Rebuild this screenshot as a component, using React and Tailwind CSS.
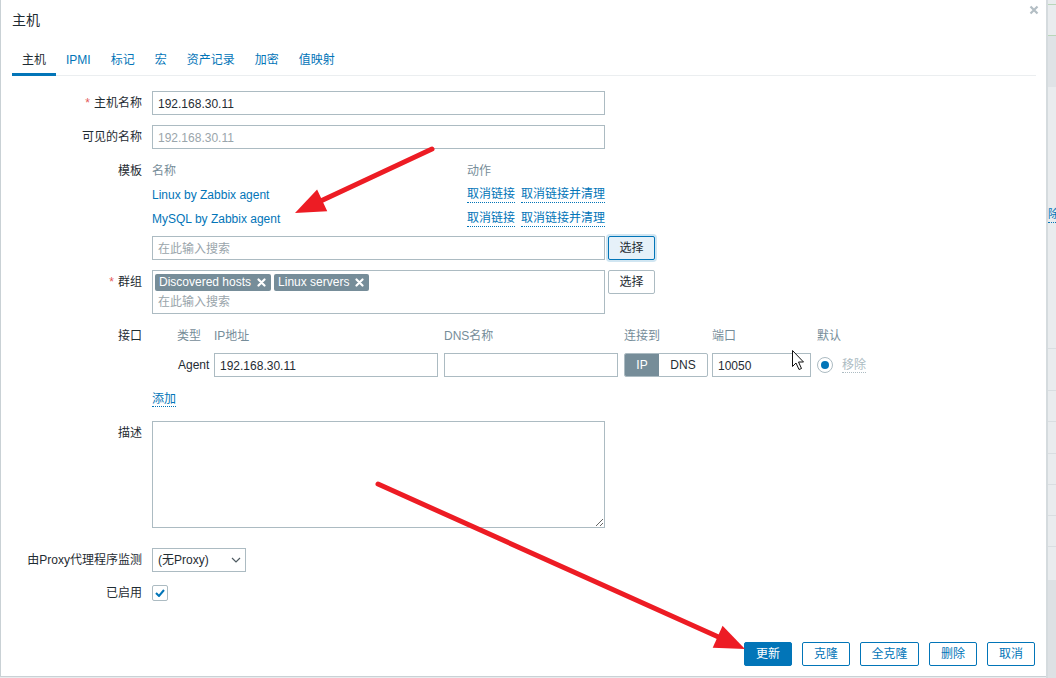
import React from "react";

const FONT = "font-['Liberation_Sans','Noto_Sans_CJK_SC',sans-serif]";

const Row = ({ label, required, labelClass = "leading-[24px]", className = "", children }) => (
  <div className={`flex ${className}`}>
    <div className={`w-[141px] shrink-0 text-right text-[#1f2c33] ${labelClass}`}>
      {required && <span className="text-[#e45959] mr-[4px]">*</span>}
      {label}
    </div>
    <div className="ml-[10px] flex-1">{children}</div>
  </div>
);

const Input = ({ value, placeholder, className = "w-[453px]" }) => (
  <div className={`h-[24px] border border-[#acbbc2] bg-white px-[5px] pt-px leading-[22px] ${className}`}>
    {value ? (
      <span className="text-[#1f2c33]">{value}</span>
    ) : (
      <span className="text-[#9aa5ab]">{placeholder}</span>
    )}
  </div>
);

const Tag = ({ text }) => (
  <span className="flex h-[17px] items-center gap-[6px] rounded-[2px] bg-[#768d99] pl-[4px] pr-[5px] text-white leading-[17px]">
    {text}
    <svg width="9" height="9" viewBox="0 0 9 9">
      <path d="M1.5 1.5l6 6M7.5 1.5l-6 6" stroke="#fff" strokeWidth="2.2" strokeLinecap="round" />
    </svg>
  </span>
);

const DotLink = ({ children, gray }) => (
  <span
    className={`border-b border-dotted leading-[15px] ${
      gray ? "text-[#acbbc2] border-[#acbbc2]" : "text-[#0275b8] border-[#0275b8]"
    }`}
  >
    {children}
  </span>
);

const tabs = ["主机", "IPMI", "标记", "宏", "资产记录", "加密", "值映射"];
const footerButtons = [
  { text: "更新", w: "w-[48px]", primary: true },
  { text: "克隆", w: "w-[48px]" },
  { text: "全克隆", w: "w-[59px]" },
  { text: "删除", w: "w-[48px]" },
  { text: "取消", w: "w-[48px]" },
];

function Arrow({ x1, y1, x2, y2, len = 30, half = 12 }) {
  const dx = x2 - x1;
  const dy = y2 - y1;
  const d = Math.hypot(dx, dy);
  const ux = dx / d;
  const uy = dy / d;
  const bx = x2 - ux * len;
  const by = y2 - uy * len;
  const px = -uy;
  const py = ux;
  const pts = `${x2},${y2} ${bx + px * half},${by + py * half} ${bx - px * half},${by - py * half}`;
  return (
    <g>
      <line x1={x1} y1={y1} x2={bx + ux * 4} y2={by + uy * 4} stroke="#ed1c24" strokeWidth="5" strokeLinecap="round" />
      <polygon points={pts} fill="#ed1c24" />
    </g>
  );
}

export default function App() {
  return (
    <div className={`relative flex h-[678px] w-[1056px] overflow-hidden bg-[#e9ecee] text-[12px] ${FONT}`}>
      {/* dialog */}
      <div className="relative flex h-[677px] w-[1046px] shrink-0 flex-col border-b border-l border-[#c9d1d5] bg-white">
        <div className="flex h-[40px] items-center pl-[11px] text-[14px] text-[#1f2c33]">主机</div>
        <svg className="absolute right-[7px] top-[5px]" width="10" height="10" viewBox="0 0 10 10">
          <path d="M1.5 1.5l7 7M8.5 1.5l-7 7" stroke="#b3bec4" strokeWidth="2.2" />
        </svg>

        {/* tabs */}
        <div className="ml-[11px] mr-[10px] flex border-b border-[#ebeef0]">
          {tabs.map((t, i) => (
            <div
              key={t}
              className={`-mb-px px-[10px] pt-[13px] pb-[6px] leading-[14px] border-b-[3px] ${
                i === 0 ? "border-[#0275b8] text-[#1f2c33]" : "border-transparent text-[#0275b8]"
              }`}
            >
              {t}
            </div>
          ))}
        </div>

        {/* form */}
        <div className="pt-[15px]">
          <Row label="主机名称" required>
            <Input value="192.168.30.11" />
          </Row>
          <Row label="可见的名称" className="mt-[10px]">
            <Input placeholder="192.168.30.11" />
          </Row>

          <Row label="模板" className="mt-[10px]">
            <div className="grid grid-cols-[315px_1fr] leading-[24px]">
              <div className="text-[#768d99]">名称</div>
              <div className="text-[#768d99]">动作</div>
              <div className="text-[#0275b8]">Linux by Zabbix agent</div>
              <div className="flex items-center gap-[6px]">
                <DotLink>取消链接</DotLink>
                <DotLink>取消链接并清理</DotLink>
              </div>
              <div className="text-[#0275b8]">MySQL by Zabbix agent</div>
              <div className="flex items-center gap-[6px]">
                <DotLink>取消链接</DotLink>
                <DotLink>取消链接并清理</DotLink>
              </div>
            </div>
            <div className="mt-[5px] flex">
              <Input placeholder="在此输入搜索" />
              <button className="ml-[3px] h-[24px] w-[47px] rounded-[2px] border border-[#0275b8] bg-[#e6f1f9] text-[#1f2c33] shadow-[0_0_0_2px_rgba(2,117,184,0.18)]">
                选择
              </button>
            </div>
          </Row>

          <Row label="群组" required className="mt-[10px]">
            <div className="flex">
              <div className="h-[44px] w-[453px] border border-[#acbbc2] px-[2px] pt-[3px]">
                <div className="flex gap-[3px]">
                  <Tag text="Discovered hosts" />
                  <Tag text="Linux servers" />
                </div>
                <div className="mt-[2px] pl-[3px] leading-[18px] text-[#9aa5ab]">在此输入搜索</div>
              </div>
              <button className="ml-[3px] h-[24px] w-[47px] rounded-[2px] border border-[#acbbc2] bg-white text-[#1f2c33]">
                选择
              </button>
            </div>
          </Row>

          <Row label="接口" labelClass="leading-[22px] pt-px" className="mt-[10px]">
            <div className="flex h-[22px] items-center pt-px text-[#768d99]">
              <div className="w-[62px] pl-[25px]">类型</div>
              <div className="w-[230px]">IP地址</div>
              <div className="w-[180px]">DNS名称</div>
              <div className="w-[88px]">连接到</div>
              <div className="w-[105px]">端口</div>
              <div>默认</div>
            </div>
            <div className="mt-[7px] flex items-center">
              <div className="w-[62px] pl-[26px] text-[#1f2c33]">Agent</div>
              <Input value="192.168.30.11" className="w-[224px]" />
              <Input className="ml-[6px] w-[174px]" />
              <div className="ml-[6px] flex h-[24px] w-[84px] overflow-hidden rounded-[2px] border border-[#acbbc2]">
                <div className="flex w-[34px] items-center justify-center bg-[#768d99] text-white">IP</div>
                <div className="flex flex-1 items-center justify-center text-[#1f2c33]">DNS</div>
              </div>
              <Input value="10050" className="ml-[4px] w-[99px]" />
              <div className="ml-[6px] flex h-[16px] w-[16px] items-center justify-center rounded-full border border-[#acbbc2]">
                <div className="h-[8px] w-[8px] rounded-full bg-[#0275b8]" />
              </div>
              <div className="ml-[9px]">
                <DotLink gray>移除</DotLink>
              </div>
            </div>
            <div className="mt-[12px] h-[20px] leading-[20px]">
              <DotLink>添加</DotLink>
            </div>
          </Row>

          <Row label="描述" className="mt-[12px]">
            <textarea className="block h-[107px] w-[453px] resize border border-[#acbbc2] outline-none" />
          </Row>

          <Row label="由Proxy代理程序监测" className="mt-[20px]">
            <div className="flex h-[24px] w-[94px] items-center justify-between border border-[#acbbc2] pl-[5px] pr-[4px] text-[#1f2c33]">
              (无Proxy)
              <svg width="10" height="6" viewBox="0 0 10 6">
                <path d="M1 1l4 4 4-4" stroke="#4f5b62" strokeWidth="1.2" fill="none" />
              </svg>
            </div>
          </Row>

          <Row label="已启用" labelClass="leading-[16px]" className="mt-[13px]">
            <div className="flex h-[16px] w-[16px] items-center justify-center rounded-[2px] border border-[#acbbc2]">
              <svg width="10" height="8" viewBox="0 0 10 8">
                <path d="M1 4l3 3 5-6" stroke="#0275b8" strokeWidth="2" fill="none" />
              </svg>
            </div>
          </Row>
        </div>

        {/* footer */}
        <div className="mt-auto flex justify-end gap-[10px] pb-[10px] pr-[11px]">
          {footerButtons.map((b) => (
            <button
              key={b.text}
              className={`h-[24px] ${b.w} rounded-[2px] border border-[#0275b8] ${
                b.primary ? "bg-[#0275b8] text-white" : "bg-white text-[#0275b8]"
              }`}
            >
              {b.text}
            </button>
          ))}
        </div>
      </div>

      {/* background page strip */}
      <div className="flex w-[10px] flex-col border-l-2 border-[#d5dbde]">
        <div className="mt-[4px] h-px bg-[#b9d6b9]" />
        <div className="mt-[30px] h-[52px] border-t border-[#b9d6b9] bg-[#dfe3e6]" />
        <div className="mt-[120px] h-[16px] overflow-hidden border-b border-dotted border-[#0275b8] text-[11px] leading-[14px] text-[#0275b8]">
          除
        </div>
        <div className="mt-[125px] h-px bg-[#d9dee1]" />
        <div className="mt-[41px] h-px bg-[#d9dee1]" />
        <div className="mt-[30px] h-px bg-[#d9dee1]" />
        <div className="mt-[31px] h-px bg-[#d9dee1]" />
        <div className="mt-[30px] h-px bg-[#d9dee1]" />
        <div className="mt-[30px] h-px bg-[#d9dee1]" />
        <div className="mt-[30px] h-px bg-[#d9dee1]" />
        <div className="mt-[33px] flex-1 bg-[#dde1e4]" />
      </div>

      {/* annotations */}
      <svg className="pointer-events-none absolute inset-0" width="1056" height="678" viewBox="0 0 1056 678">
        <Arrow x1={432} y1={149} x2={295} y2={213} />
        <Arrow x1={378} y1={484} x2={745} y2={649} len={30} half={12} />
        <path
          d="M792.5 350.5v16l3.5-3.5 3 6.5 2.5-1-3-6.5h5z"
          fill="#fff"
          stroke="#111"
          strokeWidth="1"
          strokeLinejoin="round"
        />
      </svg>
    </div>
  );
}
